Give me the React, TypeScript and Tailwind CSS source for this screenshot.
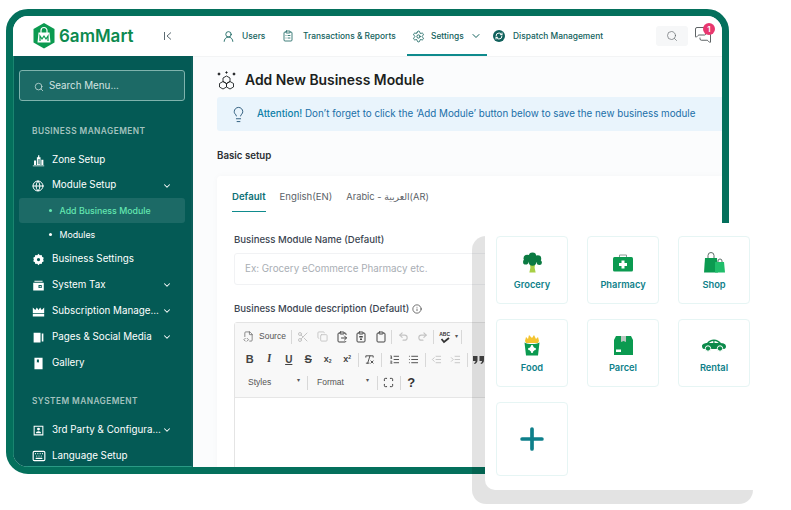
import React from "react";
import {
  Search, ChevronDown, UserRound, ClipboardList, Settings, RefreshCw, Lightbulb, Info, FileCode2, Scissors, Copy, ClipboardPaste,
  Clipboard, ClipboardType, Undo2, Redo2, ListOrdered, List, IndentDecrease, IndentIncrease, Maximize, RemoveFormatting, Globe, Plus, MessagesSquare, Keyboard,
} from "lucide-react";

const Svg = ({ children, w = 13, h = 13, vb = "0 0 16 16" }: { children: React.ReactNode; w?: number; h?: number; vb?: string }) => (
  <svg width={w} height={h} viewBox={vb} fill="currentColor" className="shrink-0">{children}</svg>
);

const ZoneIcon = () => (
  <Svg><path d="M1 14h14v1H1z" /><path fillRule="evenodd" d="M6 4h1.500V1.500h1.500V4H10.500v9.500H6zM7.300 6v6.500h.7V6zM9 6v6.500h.6V6z" /><path d="M2.500 8H5v5.500H2.500zM11.500 7H14v6.500h-2.500z" /></Svg>
);
const GearIcon = () => (
  <Svg><path fillRule="evenodd" d="M8 1l1.600 1.700 2.300-.3.5 2.300 2.100 1-.8 2.300.8 2.300-2.100 1-.5 2.300-2.300-.3L8 15l-1.600-1.700-2.300.3-.5-2.300-2.100-1 .8-2.300-.8-2.300 2.100-1 .5-2.300 2.300.3zM8 6a2 2 0 100 4 2 2 0 000-4z" /></Svg>
);
const TaxIcon = () => (
  <Svg><path fillRule="evenodd" d="M3 2h10v1.500H3zM1.500 4.500h13V14h-13zM8 7.500V11h4V7.500zM9.300 8.500h1.500V10H9.300z" /></Svg>
);
const CrownIcon = () => (
  <Svg><path d="M1 3l3 3 2-3 2 3 2-3 2 3 3-3v7H1z" /><path d="M1 11h14v3H1z" /></Svg>
);
const PagesIcon = () => (
  <Svg><path d="M2 2h8.500v12H2z" /><path d="M12 3h2v10h-2z" /></Svg>
);
const GalleryIcon = () => (
  <Svg><path fillRule="evenodd" d="M3 1h10v14H3zM6 3v4l1.300-1 1.200 1V3z" /></Svg>
);
const ContactIcon = () => (
  <Svg><path fillRule="evenodd" d="M2 2h12v12H2zM3.300 3.300v9.400h9.400V3.300zM8 4.500a1.800 1.800 0 110 3.600 1.800 1.800 0 010-3.600zM4.800 11.500c0-1.700 1.400-2.700 3.200-2.700s3.200 1 3.200 2.700z" /></Svg>
);

const Row = ({ icon, label, chevron, h = "h-[26px]" }: { icon: React.ReactNode; label: string; chevron?: boolean; h?: string }) => (
  <div className={`${h} flex items-center text-white text-[9.800px] pl-[13px] pr-[13px]`}>
    <span className="w-[20px] flex justify-start shrink-0">{icon}</span>
    <span className="whitespace-nowrap">{label}</span>
    {chevron && <ChevronDown size={10} strokeWidth={2.500} className="shrink-0 ml-auto" />}
  </div>
);

const NavItem = ({ icon, label, cls }: { icon: React.ReactNode; label: string; cls: string }) => (
  <div className={`flex items-center text-[#11615c] text-[8.400px] font-medium ${cls}`}>
    <span className="shrink-0 flex">{icon}</span>
    <span className="whitespace-nowrap">{label}</span>
  </div>
);

const Tb = ({ children, dim, w = "w-[19.500px]" }: { children: React.ReactNode; dim?: boolean; w?: string }) => (
  <span className={`${w} h-[18px] flex items-center justify-center shrink-0 ${dim ? "text-[#c4c4c4]" : "text-[#444]"}`}>{children}</span>
);
const Sep = () => <span className="w-px h-[14px] bg-[#d8d8d8] mx-[1px] shrink-0" />;
const SepWide = () => <span className="w-px h-[14px] bg-[#d8d8d8] ml-[1px] mr-[3px] shrink-0" />;

const Hex = () => (
  <svg width="22" height="26" viewBox="0 0 22 26" className="shrink-0">
    <path d="M11 0l10.500 6v13.500L11 25.500.500 19.500V6z" fill="#0b9a50" />
    <path d="M5.500 9.500h11l1 10h-13z" fill="#fff" />
    <path d="M8 10V7.500a3 3 0 016 0V10" fill="none" stroke="#fff" strokeWidth="1.200" />
    <path d="M7 18v-5l2 3 2-3 2 3 2-3v5" fill="none" stroke="#0b9a50" strokeWidth="1.200" />
  </svg>
);

const Broccoli = () => (
  <svg width="21" height="21" viewBox="0 0 20 20">
    <path d="M7.500 11h5l-.5 4 1 4.500H7l1-4.500z" fill="#a8cf45" />
    <circle cx="10" cy="4" r="3.500" fill="#0b7a42" /><circle cx="5" cy="6" r="3.500" fill="#0b7a42" /><circle cx="15" cy="6.500" r="3.300" fill="#0b7a42" />
    <circle cx="3.500" cy="9.500" r="2.500" fill="#0b7a42" /><circle cx="16.500" cy="10" r="2.400" fill="#0b7a42" /><circle cx="10" cy="9" r="4" fill="#0b7a42" />
  </svg>
);
const Aid = () => (
  <svg width="20" height="20" viewBox="0 0 20 20">
    <path d="M6.500 6V3h7v3" fill="none" stroke="#8a9a94" strokeWidth="1" />
    <rect y="5" width="20" height="14.500" rx="1.500" fill="#0b9a50" />
    <path d="M8.500 8.500h3V11H14v3h-2.500v2.500h-3V14H6v-3h2.500z" fill="#fff" />
  </svg>
);
const Bags = () => (
  <svg width="21" height="21" viewBox="0 0 21 21">
    <path d="M4 6V3.500a3 3 0 016 0V6" fill="none" stroke="#5d6f68" strokeWidth="1" />
    <path d="M14 10V9a2 2 0 014 0v1" fill="none" stroke="#5d6f68" strokeWidth="1" />
    <path d="M1 6h12l1 14.500H0z" fill="#0b9a50" />
    <path d="M11 10h9l1 10.500H11z" fill="#20bd6a" />
  </svg>
);
const Fries = () => (
  <svg width="16" height="21" viewBox="0 0 16 21">
    <path d="M1 6l1-4 2 2 1-4 3 3 2-3 2 4 2-2 1 4-1 2H2z" fill="#f4c430" />
    <path d="M.500 7.500C4 9.500 12 9.500 15.500 7.500L14 20.500H2z" fill="#0b9a50" />
    <circle cx="8" cy="14" r="2.500" fill="#fff" />
    <circle cx="8" cy="11.300" r="1.200" fill="#fff" /><circle cx="8" cy="16.700" r="1.200" fill="#fff" /><circle cx="5.300" cy="14" r="1.200" fill="#fff" /><circle cx="10.700" cy="14" r="1.200" fill="#fff" />
  </svg>
);
const Parcel = () => (
  <svg width="19" height="19" viewBox="0 0 19 19">
    <path d="M2 0h15l2 4v15H0V4z" fill="#0b9a50" />
    <path d="M7 0h5v6l-2.500-1L7 6z" fill="#b9c7c0" />
    <rect x="2" y="13.500" width="5" height="2.500" fill="#fff" />
  </svg>
);
const Car = () => (
  <svg width="24" height="13" viewBox="0 0 24 13">
    <path d="M0 7c0-2 3-3 5-3 1.500-2 4-3.500 7-3.500 3 0 5 1.500 7 3.500 2.500.3 5 1 5 3.500 0 1.500-1 2.500-2 2.500H2C1 10 0 9 0 7z" fill="#0b8a4a" />
    <path d="M7 4c1-1 2.500-2 4.300-2v2zM12.500 2c2 0 3.200 1 4.200 2h-4.200z" fill="#fff" />
    <circle cx="6" cy="9.500" r="2.700" fill="#0b8a4a" stroke="#fff" strokeWidth="1" /><circle cx="18" cy="9.500" r="2.700" fill="#0b8a4a" stroke="#fff" strokeWidth="1" />
  </svg>
);
const QuoteMarks = () => (
  <svg width="11" height="8" viewBox="0 0 11 8" fill="currentColor"><path d="M0 0h4.500v4C4.500 6 3.500 7.500 1.500 8L1 7c1-.3 1.500-1 1.500-2H0zM6.500 0H11v4c0 2-1 3.500-3 4l-.5-1c1-.3 1.500-1 1.500-2H6.500z" /></svg>
);

const Card = ({ icon, label }: { icon: React.ReactNode; label: string }) => (
  <div className="h-[68px] rounded-[4px] border border-[#e6f5f4] bg-white flex flex-col items-center pt-[14px]">
    <div className="h-[22px] flex items-center justify-center">{icon}</div>
    <div className="mt-[6px] text-[9.300px] font-semibold text-[#0e7f8a] leading-[12px]">{label}</div>
  </div>
);

export default function App() {
  return (
    <div className="relative w-[791px] h-[510px] overflow-hidden bg-white font-['Inter','DejaVu_Sans',sans-serif]">
      <div className="pl-[6px] pt-[9px]">
        <div className="w-[723px] h-[465px] border-[7px] border-[#04705c] rounded-[22px] overflow-hidden flex flex-col bg-[#fbfcfd]">
          <header className="h-[40px] shrink-0 bg-white flex items-center">
            <div className="w-[180px] shrink-0 flex items-center pl-[20px]">
              <Hex />
              <span className="ml-[4px] text-[17px] font-semibold text-[#0b8a4f] leading-none w-[73px] whitespace-nowrap">6amMart</span>
              <span className="ml-[31px] text-[#5c6b72] flex items-center">
                <svg width="10" height="10" viewBox="0 0 10 10" fill="none" stroke="currentColor" strokeWidth="1"><path d="M1.500 1v8M8 1.500L4 5l4 3.500" /></svg>
              </span>
            </div>
            <nav className="flex-1 h-full flex items-center pl-[29px]">
              <NavItem cls="w-[60px] gap-[7px]" label="Users" icon={<UserRound size={13} strokeWidth={1.600} />} />
              <NavItem cls="w-[126px] gap-[9px]" label="Transactions & Reports" icon={<ClipboardList size={12} strokeWidth={1.600} />} />
              <div className="relative h-full w-[85px] flex items-center pl-[4px]">
                <NavItem cls="gap-[6px]" label="Settings" icon={<Settings size={13} strokeWidth={1.600} />} />
                <ChevronDown size={12} strokeWidth={2} className="ml-[6px] text-[#11615c]" />
                <span className="absolute left-[-1px] bottom-0 w-[80px] h-[2px] bg-[#0f8b8d]" />
              </div>
              <NavItem cls="gap-[8px]" label="Dispatch Management" icon={
                <span className="w-[12px] h-[12px] rounded-full bg-[#11615c] flex items-center justify-center text-white"><RefreshCw size={8} strokeWidth={3} /></span>
              } />
              <div className="ml-auto mr-[10px] flex items-center">
                <span className="w-[32px] h-[20px] rounded-[3px] bg-[#f6f7f8] flex items-center justify-center text-[#5c6366]"><Search size={12} strokeWidth={1.300} /></span>
                <span className="relative ml-[6px] text-[#3c4345] -mt-[3px]">
                  <MessagesSquare size={18} strokeWidth={1.100} className="block" />
                  <span className="absolute right-[-3px] top-[-3px] w-[12px] h-[12px] rounded-full bg-[#e8376f] text-white text-[8px] font-semibold flex items-center justify-center leading-none">1</span>
                </span>
              </div>
            </nav>
          </header>
          <div className="flex-1 min-h-0 flex">
            <aside className="w-[180px] shrink-0 bg-[#045a55] pt-[14px] pl-[5px] pr-[6px] border-l border-b border-l-[#1a8570] border-b-[#2a9a85] border-r-2 border-r-[#0c5f5b] overflow-hidden">
              <div className="h-[31px] rounded-[3px] border border-[#7fb3ad] bg-[#1c6a66] flex items-center pl-[14px] pt-[2px] text-[#d3e4e2] text-[9.800px] gap-[5px]">
                <Search size={10} strokeWidth={1.800} />
                <span>Search Menu...</span>
              </div>
              <div className="mt-[24px] h-[12px] pl-[13px] text-[8.300px] leading-[12px] font-semibold tracking-[0.45px] text-[#a3c2bf]">BUSINESS MANAGEMENT</div>
              <div className="mt-[10px]">
                <Row icon={<ZoneIcon />} label="Zone Setup" />
                <Row h="h-[25px]" icon={<Globe size={12} strokeWidth={2} />} label="Module Setup" chevron />
                <div className="h-[25px] rounded-[3px] bg-[#1c6a66] flex items-center pl-[30px] text-[#63e6b0] text-[8.800px] font-medium gap-[7.500px]">
                  <span className="w-[3px] h-[3px] rounded-full bg-[#63e6b0]" />Add Business Module
                </div>
                <div className="h-[23px] flex items-center pl-[30px] text-white text-[8.800px] gap-[7.500px]">
                  <span className="w-[3px] h-[3px] rounded-full bg-white" />Modules
                </div>
                <Row icon={<GearIcon />} label="Business Settings" />
                <Row icon={<TaxIcon />} label="System Tax" chevron />
                <Row icon={<CrownIcon />} label="Subscription Manage..." chevron />
                <Row icon={<PagesIcon />} label="Pages & Social Media" chevron />
                <Row icon={<GalleryIcon />} label="Gallery" />
              </div>
              <div className="mt-[19px] h-[12px] pl-[13px] text-[8.300px] leading-[12px] font-semibold tracking-[0.45px] text-[#a3c2bf]">SYSTEM MANAGEMENT</div>
              <div className="mt-[10px]">
                <Row icon={<ContactIcon />} label="3rd Party & Configura..." chevron />
                <Row icon={<Keyboard size={14} strokeWidth={2} />} label="Language Setup" />
              </div>
            </aside>
            <main className="flex-1 min-w-0 pl-[24px] overflow-hidden border-t border-[#f3f4f5]">
              <div className="h-[40px] flex items-center gap-[9px] text-[#1c1f21]">
                <svg width="19" height="19" viewBox="0 0 19 19" fill="none" stroke="currentColor" strokeWidth="0.900" className="shrink-0 mt-[7px]">
                  <path d="M9.500 5l3.500 2v3.500l-3.500 2-3.500-2V7zM6 10.500l3.500 2V16L6 18l-3.500-2v-3.500zM13 10.500l3.500 2V16L13 18l-3.500-2v-3.500z" />
                  <circle cx="2" cy="3" r="1" fill="currentColor" /><circle cx="17" cy="3" r="1" fill="currentColor" /><circle cx="9.500" cy="1.500" r="0.700" fill="currentColor" />
                </svg>
                <h1 className="text-[13.900px] font-semibold mt-[6px] whitespace-nowrap">Add New Business Module</h1>
              </div>
              <div className="h-[34px] bg-[#e9f4fc] rounded-l-[3px] flex items-center text-[9.800px] text-[#1a6fa8] pl-[13px] gap-[10px] whitespace-nowrap">
                <Lightbulb size={17} strokeWidth={1.200} className="text-[#17486b] shrink-0" />
                <span className="font-medium text-[#0d7fa8]">Attention!<span className="font-normal text-[#1a6fa8]"> Don&rsquo;t forget to click the &lsquo;Add Module&rsquo; button below to save the new business module</span></span>
              </div>
              <div className="h-[45px] pt-[6px] flex items-center text-[9.700px] font-semibold text-[#2b2f33]">Basic setup</div>
              <section className="bg-white rounded-l-[4px] pl-[15px] pt-[14px] shadow-[0_0_6px_rgba(0,0,0,0.03)] h-[300px]">
                <div className="flex gap-[14px] text-[9.600px] text-[#5b6268] leading-[13px]">
                  <div className="h-[22px] border-b border-[#0f8b8d] font-semibold text-[#0d7076]">Default</div>
                  <div>English(EN)</div>
                  <div className="text-[9.300px]">Arabic - العربية(AR)</div>
                </div>
                <div className="pl-[2px] pr-[10px]">
                  <div className="mt-[21px] text-[9.600px] font-medium text-[#3a4450] leading-[13px]">Business Module Name (Default)</div>
                  <div className="mt-[7px] h-[32px] rounded-[3px] border border-[#f1f2f4] flex items-center pl-[10px] text-[9.800px] text-[#a9aeb4]">Ex: Grocery eCommerce Pharmacy etc.</div>
                  <div className="mt-[17px] text-[9.600px] font-medium text-[#3a4450] leading-[13px] flex items-center gap-[3px]">Business Module description (Default) <Info size={10} strokeWidth={1.500} className="text-[#222]" /></div>
                  <div className="mt-[7px] rounded-t-[3px] border border-[#e4e4e4] h-[160px] font-['Liberation_Sans',sans-serif]">
                    <div className="h-[75px] bg-[#f8f8f8] border-b border-[#e6e6e6] pt-[2px] pl-[5px] text-[8.500px] text-[#555]">
                      <div className="h-[23px] flex items-center">
                        <Tb w="w-[16px]"><FileCode2 size={11} strokeWidth={1.300} /></Tb>
                        <span className="ml-[3px] mr-[4px]">Source</span><Sep />
                        <Tb dim><Scissors size={12} /></Tb><Tb dim><Copy size={11} /></Tb>
                        <Tb><ClipboardPaste size={12} /></Tb><Tb><ClipboardType size={12} /></Tb><Tb><Clipboard size={12} /></Tb><Sep />
                        <Tb dim><Undo2 size={11} strokeWidth={2.500} /></Tb><Tb dim><Redo2 size={11} strokeWidth={2.500} /></Tb><Sep />
                        <Tb>
                          <span className="relative w-[12px] h-[12px] block text-[#333]">
                            <span className="block text-[5px] leading-[6px] font-bold">ABC</span>
                            <svg width="12" height="7" viewBox="0 0 12 7" fill="none" stroke="currentColor" strokeWidth="1.800" className="block"><path d="M2.500 2l2.500 3 5-4" /></svg>
                          </span>
                        </Tb><span className="text-[6px] mr-[2px]">▾</span><Sep />
                      </div>
                      <div className="h-[23px] flex items-center text-[11px] text-[#333]">
                        <Tb><b>B</b></Tb><Tb><i className="font-serif font-bold">I</i></Tb><Tb><u className="font-bold text-[10px]">U</u></Tb><Tb><s className="font-bold">S</s></Tb>
                        <Tb><span className="text-[9px] font-bold">x<sub className="text-[5px]">2</sub></span></Tb><Tb><span className="text-[9px] font-bold">x<sup className="text-[5px]">2</sup></span></Tb><Sep />
                        <Tb><RemoveFormatting size={11} /></Tb><SepWide />
                        <Tb><ListOrdered size={11} /></Tb><Tb><List size={11} /></Tb><Sep />
                        <Tb dim><IndentDecrease size={11} /></Tb><Tb dim><IndentIncrease size={11} /></Tb><Sep />
                        <Tb><QuoteMarks /></Tb>
                      </div>
                      <div className="h-[23px] flex items-center pl-[8px] text-[8.500px]">
                        <span className="w-[58px] flex justify-between pr-[6px]"><span>Styles</span><span className="text-[6px]">▾</span></span><Sep />
                        <span className="w-[67px] pl-[8px] flex justify-between pr-[7px]"><span>Format</span><span className="text-[6px]">▾</span></span><Sep />
                        <Tb><Maximize size={11} strokeWidth={2} className="text-[#333]" /></Tb><Sep />
                        <Tb><span className="text-[13px] font-bold text-[#333]">?</span></Tb>
                      </div>
                    </div>
                  </div>
                </div>
              </section>
            </main>
          </div>
        </div>
      </div>
      <div className="absolute left-[472px] top-[236px] w-[281px] h-[268px] rounded-[14px] bg-black/[0.11]" />
      <div className="absolute left-[485px] top-[223px] w-[268px] h-[267px] rounded-bl-[10px] rounded-tl-[10px] bg-white pl-[11px] pt-[13px] pr-[3px]">
        <div className="grid grid-cols-[72px_72px_72px] gap-x-[19px] gap-y-[15px]">
          <Card icon={<Broccoli />} label="Grocery" />
          <Card icon={<Aid />} label="Pharmacy" />
          <Card icon={<Bags />} label="Shop" />
          <Card icon={<Fries />} label="Food" />
          <Card icon={<Parcel />} label="Parcel" />
          <Card icon={<Car />} label="Rental" />
          <div className="h-[74px] rounded-[4px] border border-[#e6f5f4] flex items-center justify-center text-[#0e7f8a]">
            <Plus size={34} strokeWidth={2.600} />
          </div>
        </div>
      </div>
    </div>
  );
}
